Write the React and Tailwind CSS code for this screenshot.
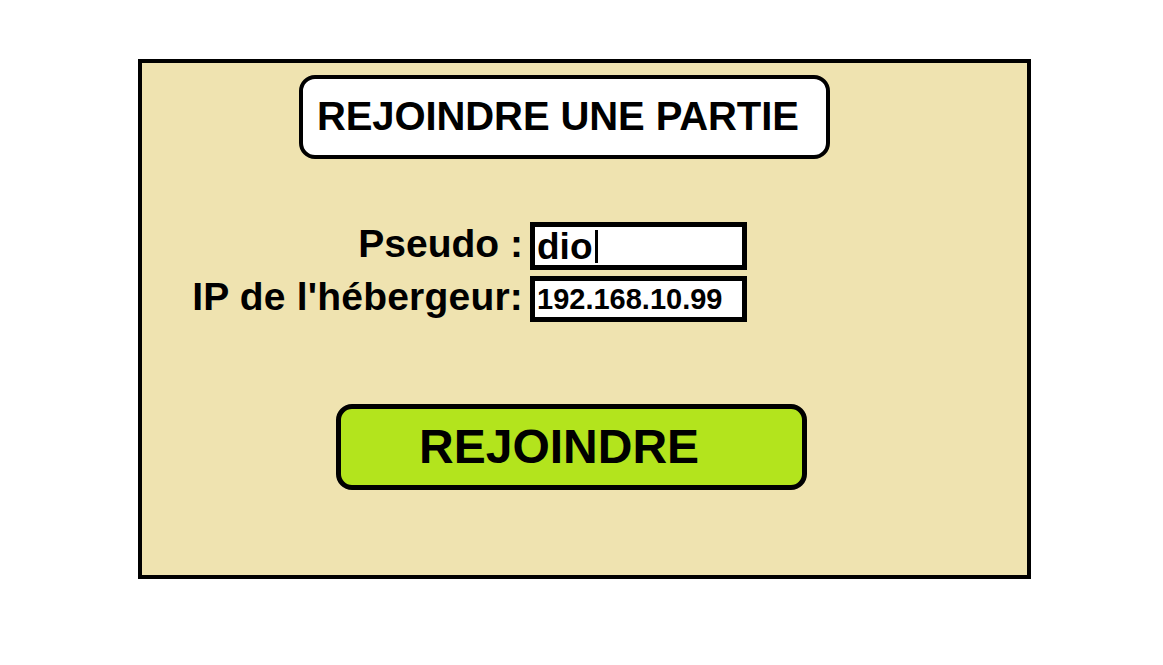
export default function App() {
  const font = { fontFamily: '"Liberation Sans", Arial, sans-serif' };
  return (
    <div className="w-[1163px] h-[665px] bg-white pt-[59px] pl-[138px]" style={font}>
      <div className="w-[893px] h-[520px] border-[4px] border-black bg-[#efe3b0] flex flex-col">
        <div className="ml-[157px] mt-[12px] w-[531px] h-[84px] border-[4px] border-black rounded-[16px] bg-white flex items-center pl-[14px] pb-[3px]">
          <span className="text-[40px] font-bold text-black leading-none tracking-[-0.1px]">REJOINDRE UNE PARTIE</span>
        </div>
        <div className="mt-[63px] flex flex-col gap-[6px]">
          <div className="flex items-center">
            <div className="w-[381px] text-right text-[39px] font-bold text-black leading-none mb-[5px]">Pseudo :</div>
            <div className="ml-[7px] w-[217px] h-[48px] border-[5px] border-black bg-white flex items-center pl-[2px]">
              <span className="text-[37px] font-bold leading-none text-black">dio</span>
              <span className="ml-[3px] w-[3px] h-[33px] bg-black"></span>
            </div>
          </div>
          <div className="flex items-center">
            <div className="w-[381px] text-right text-[39px] font-bold text-black leading-none tracking-[0.2px] mb-[5px]">IP de l'hébergeur:</div>
            <div className="ml-[7px] w-[217px] h-[46px] border-[5px] border-black bg-white flex items-center pl-[2px]">
              <span className="text-[29px] font-bold leading-none text-black">192.168.10.99</span>
            </div>
          </div>
        </div>
        <div className="ml-[194px] mt-[82px] w-[471px] h-[86px] border-[5px] border-black rounded-[16px] bg-[#b3e41d] flex items-center pl-[78px]">
          <span className="text-[48px] font-bold text-black leading-none">REJOINDRE</span>
        </div>
      </div>
    </div>
  );
}
